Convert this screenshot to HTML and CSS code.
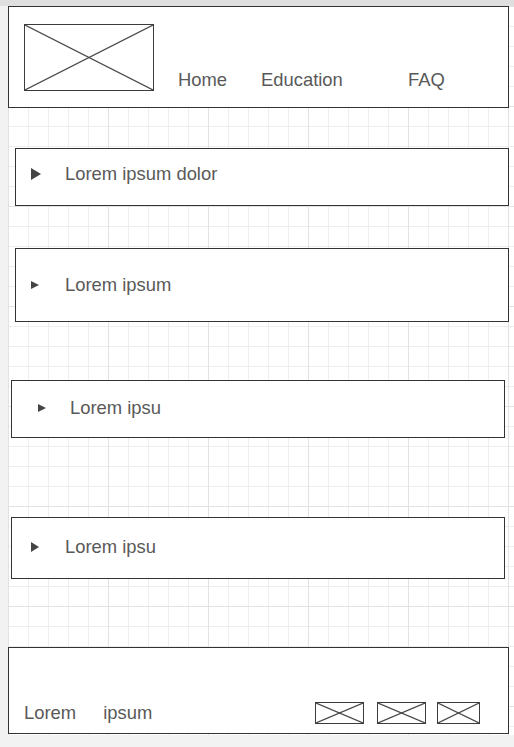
FILE: index.html
```html
<!DOCTYPE html>
<html lang="en">
<head>
<meta charset="utf-8">
<title>Wireframe</title>
<link rel="stylesheet" href="styles.css">
</head>
<body>
<div class="topbar"></div>
<div class="page">
  <main class="canvas">
    <header class="header">
      <span class="ph logo">
        <svg viewBox="0 0 100 100" preserveAspectRatio="none"><line x1="0" y1="0" x2="100" y2="100"/><line x1="0" y1="100" x2="100" y2="0"/></svg>
      </span>
      <nav class="nav">
        <span class="nav-item">Home</span>
        <span class="nav-item">Education</span>
        <span class="nav-item">FAQ</span>
      </nav>
    </header>

    <section class="acc acc-1">
      <span class="tri tri-lg"></span>
      <span class="acc-label">Lorem ipsum dolor</span>
    </section>

    <section class="acc acc-2">
      <span class="tri"></span>
      <span class="acc-label">Lorem ipsum</span>
    </section>

    <section class="acc acc-3">
      <span class="tri"></span>
      <span class="acc-label">Lorem ipsu</span>
    </section>

    <section class="acc acc-4">
      <span class="tri tri-md"></span>
      <span class="acc-label">Lorem ipsu</span>
    </section>

    <footer class="footer">
      <span class="foot-text">Lorem</span>
      <span class="foot-text foot-second">ipsum</span>
      <div class="foot-icons">
        <span class="ph icon icon-wide">
          <svg viewBox="0 0 100 100" preserveAspectRatio="none"><line x1="0" y1="0" x2="100" y2="100"/><line x1="0" y1="100" x2="100" y2="0"/></svg>
        </span>
        <span class="ph icon icon-wide icon-gap1">
          <svg viewBox="0 0 100 100" preserveAspectRatio="none"><line x1="0" y1="0" x2="100" y2="100"/><line x1="0" y1="100" x2="100" y2="0"/></svg>
        </span>
        <span class="ph icon icon-narrow icon-gap2">
          <svg viewBox="0 0 100 100" preserveAspectRatio="none"><line x1="0" y1="0" x2="100" y2="100"/><line x1="0" y1="100" x2="100" y2="0"/></svg>
        </span>
      </div>
    </footer>
  </main>
</div>
</body>
</html>
```

FILE: styles.css
```css
* {
  box-sizing: border-box;
}

html, body {
  margin: 0;
  padding: 0;
}

body {
  background: #f2f2f2;
  font-family: "Liberation Sans", Arial, sans-serif;
  color: #595959;
  width: 514px;
  overflow: hidden;
}

.topbar {
  height: 6px;
  background: #dfdfdf;
}

.page {
  padding-left: 8px;
}

.canvas {
  display: flex;
  flex-direction: column;
  align-items: flex-start;
  padding-bottom: 1px;
  background-color: #ffffff;
  background-image:
    linear-gradient(to right, #e2e2e2 1px, transparent 1px),
    linear-gradient(to bottom, #e2e2e2 1px, transparent 1px),
    linear-gradient(to right, #eeeeee 1px, transparent 1px),
    linear-gradient(to bottom, #eeeeee 1px, transparent 1px);
  background-size: 100px 100px, 100px 100px, 20px 20px, 20px 20px;
}

/* placeholders */
.ph {
  display: block;
  border: 1px solid #3c3c3c;
  background: #ffffff;
  flex: none;
}

.ph svg {
  display: block;
  width: 100%;
  height: 100%;
}

.ph line {
  stroke: #4a4a4a;
  stroke-width: 1.2;
  vector-effect: non-scaling-stroke;
}

/* header */
.header {
  display: flex;
  align-items: flex-start;
  width: 501px;
  height: 102px;
  border: 1px solid #333333;
  background: #ffffff;
  padding: 17px 0 0 15px;
}

.logo {
  width: 130px;
  height: 67px;
}

.nav {
  display: grid;
  grid-template-columns: 83px 147px auto;
  margin-left: 24px;
  padding-top: 46px;
  font-size: 18.4px;
  line-height: 20px;
}

/* accordions */
.acc {
  display: flex;
  align-items: center;
  width: 494px;
  border: 1px solid #333333;
  background: #ffffff;
  font-size: 18.4px;
  line-height: 20px;
  padding-left: 15px;
}

.acc-1 {
  margin-top: 40px;
  margin-left: 7px;
  height: 58px;
  padding-bottom: 6px;
}

.acc-2 {
  margin-top: 42px;
  margin-left: 7px;
  height: 74px;
  padding-bottom: 1px;
}

.acc-3 {
  margin-top: 58px;
  margin-left: 3px;
  height: 58px;
  padding-left: 26px;
  padding-bottom: 2px;
}

.acc-4 {
  margin-top: 79px;
  margin-left: 3px;
  height: 62px;
  padding-left: 19px;
  padding-bottom: 2px;
}

.tri {
  flex: none;
  width: 0;
  height: 0;
  border-top: 4.5px solid transparent;
  border-bottom: 4.5px solid transparent;
  border-left: 8px solid #444444;
  margin-right: 26px;
}

.tri-lg {
  border-top-width: 6px;
  border-bottom-width: 6px;
  border-left-width: 10px;
  margin-right: 24px;
}

.tri-md {
  border-top-width: 5px;
  border-bottom-width: 5px;
  border-left-width: 8px;
}

.acc-3 .tri {
  margin-right: 24px;
}

/* footer */
.footer {
  display: flex;
  align-items: flex-end;
  margin-top: 68px;
  width: 501px;
  height: 87px;
  border: 1px solid #333333;
  background: #ffffff;
  padding: 0 28px 9px 15px;
  font-size: 18.4px;
  line-height: 20px;
}

.foot-text {
  margin-bottom: 1px;
}

.foot-second {
  margin-left: 27px;
}

.foot-icons {
  display: flex;
  margin-left: auto;
}

.icon {
  height: 22px;
}

.icon-wide {
  width: 49px;
}

.icon-narrow {
  width: 43px;
}

.icon-gap1 {
  margin-left: 13px;
}

.icon-gap2 {
  margin-left: 11px;
}
```
